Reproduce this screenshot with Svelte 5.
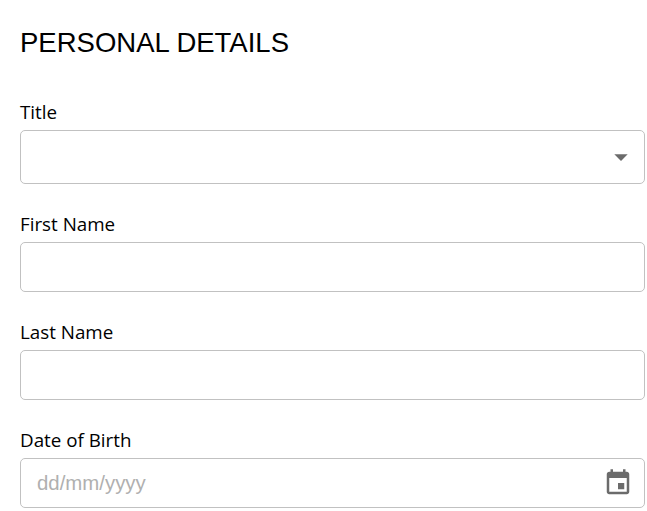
<script>
    const fields = [
        { id: 'first-name', label: 'First Name' },
        { id: 'last-name', label: 'Last Name' }
    ]
</script>

<form class="details">
    <h2 class="heading">PERSONAL DETAILS</h2>

    <div class="field first">
        <label for="title">Title</label>
        <div class="control">
            <select id="title" class="select"></select>
            <svg class="caret" width="32" height="32" viewBox="0 0 24 24">
                <path d="M7 10l5 5 5-5z"></path>
            </svg>
        </div>
    </div>

    {#each fields as field}
        <div class="field">
            <label for={field.id}>{field.label}</label>
            <input id={field.id} class="input" type="text" />
        </div>
    {/each}

    <div class="field">
        <label for="dob">Date of Birth</label>
        <div class="control">
            <input id="dob" class="input" type="text" placeholder="dd/mm/yyyy" />
            <svg class="calendar" width="30" height="30" viewBox="0 0 24 24">
                <path d="M17 12h-5v5h5v-5zM16 1v2H8V1H6v2H5c-1.11 0-1.99.9-1.99 2L3 19c0 1.1.89 2 2 2h14c1.1 0 2-.9 2-2V5c0-1.1-.9-2-2-2h-1V1h-2zm3 18H5V8h14v11z"></path>
            </svg>
        </div>
    </div>
</form>

<style>
    :global(body) {
        background: #fff;
    }

    .details {
        display: flex;
        flex-direction: column;
        padding: 0 2px 0 20px;
        height: 511px;
        box-sizing: border-box;
        overflow: hidden;
    }

    .heading {
        margin: 27px 0 0 0;
        font-family: "Liberation Sans", Arial, sans-serif;
        font-size: 27.5px;
        line-height: 32px;
        font-weight: 400;
        color: #000;
    }

    .field {
        display: flex;
        flex-direction: column;
        margin-top: 26px;
    }

    .field.first {
        margin-top: 39px;
    }

    label {
        margin-bottom: 4px;
        font-family: "Open Sans", "Noto Sans", sans-serif;
        font-size: 18.8px;
        line-height: 28px;
        color: #000;
    }

    .control {
        position: relative;
        display: flex;
    }

    .select,
    .input {
        width: 100%;
        box-sizing: border-box;
        border: 1px solid #c1c1c1;
        border-radius: 5px;
        background: #fff;
        outline: none;
        appearance: none;
    }

    .select {
        height: 54px;
    }

    .input {
        height: 50px;
        padding: 0 16px;
        font-family: "Liberation Sans", Arial, sans-serif;
        font-size: 20.4px;
    }

    .input::placeholder {
        color: #b0b0b0;
        opacity: 1;
    }

    .caret,
    .calendar {
        position: absolute;
        fill: #6b6b6b;
        pointer-events: none;
    }

    .caret {
        right: 8px;
        top: 11px;
    }

    .calendar {
        right: 12px;
        top: 10px;
    }
</style>
